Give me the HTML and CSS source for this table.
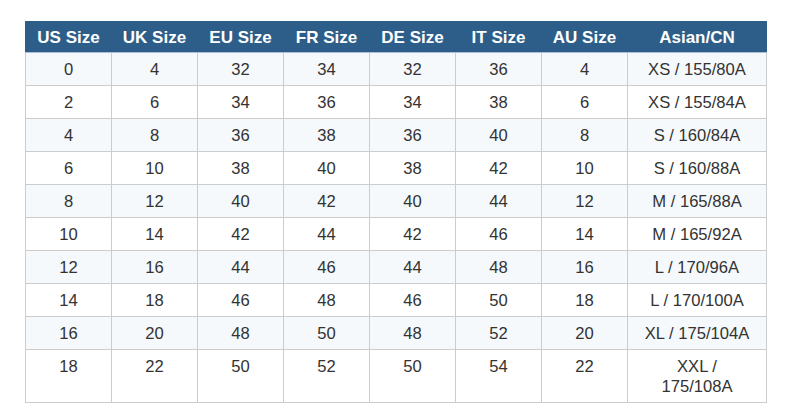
FILE: index.html
```html
<!DOCTYPE html>
<html>
<head>
<meta charset="utf-8">
<link rel="stylesheet" href="styles.css">
</head>
<body>
<div class="wrap">
<table class="sizes">
<colgroup>
<col class="c"><col class="c"><col class="c"><col class="c"><col class="c"><col class="c"><col class="c"><col class="last">
</colgroup>
<thead>
<tr><th>US Size</th><th>UK Size</th><th>EU Size</th><th>FR Size</th><th>DE Size</th><th>IT Size</th><th>AU Size</th><th>Asian/CN</th></tr>
</thead>
<tbody>
<tr><td>0</td><td>4</td><td>32</td><td>34</td><td>32</td><td>36</td><td>4</td><td>XS / 155/80A</td></tr>
<tr><td>2</td><td>6</td><td>34</td><td>36</td><td>34</td><td>38</td><td>6</td><td>XS / 155/84A</td></tr>
<tr><td>4</td><td>8</td><td>36</td><td>38</td><td>36</td><td>40</td><td>8</td><td>S / 160/84A</td></tr>
<tr><td>6</td><td>10</td><td>38</td><td>40</td><td>38</td><td>42</td><td>10</td><td>S / 160/88A</td></tr>
<tr><td>8</td><td>12</td><td>40</td><td>42</td><td>40</td><td>44</td><td>12</td><td>M / 165/88A</td></tr>
<tr><td>10</td><td>14</td><td>42</td><td>44</td><td>42</td><td>46</td><td>14</td><td>M / 165/92A</td></tr>
<tr><td>12</td><td>16</td><td>44</td><td>46</td><td>44</td><td>48</td><td>16</td><td>L / 170/96A</td></tr>
<tr><td>14</td><td>18</td><td>46</td><td>48</td><td>46</td><td>50</td><td>18</td><td>L / 170/100A</td></tr>
<tr><td>16</td><td>20</td><td>48</td><td>50</td><td>48</td><td>52</td><td>20</td><td>XL / 175/104A</td></tr>
<tr><td>18</td><td>22</td><td>50</td><td>52</td><td>50</td><td>54</td><td>22</td><td>XXL / 175/108A</td></tr>
</tbody>
</table>
</div>
</body>
</html>
```
FILE: styles.css
```css
html, body {
  margin: 0;
  padding: 0;
  background: #ffffff;
}
.wrap {
  padding: 21px 0 0 25px;
}
.sizes {
  border-collapse: collapse;
  table-layout: fixed;
  width: 741px;
  font-family: "Liberation Sans", Arial, sans-serif;
  font-size: 16.6px;
  line-height: 20px;
  color: #333333;
}
.sizes col.c { width: 86px; }
.sizes col.last { width: 139px; }
.sizes th {
  background: #2d5e8a;
  color: #ffffff;
  font-weight: bold;
  font-size: 17px;
  text-align: center;
  padding: 6px 4px 4px;
  border: 1px solid #2d5e8a;
  border-bottom: 1px solid #a9bfd4;
}
.sizes td {
  text-align: center;
  vertical-align: top;
  padding: 7px 15px 5px;
  border: 1px solid #cccccc;
}
.sizes tbody tr:nth-child(odd) td {
  background: #f5f9fc;
}
```
